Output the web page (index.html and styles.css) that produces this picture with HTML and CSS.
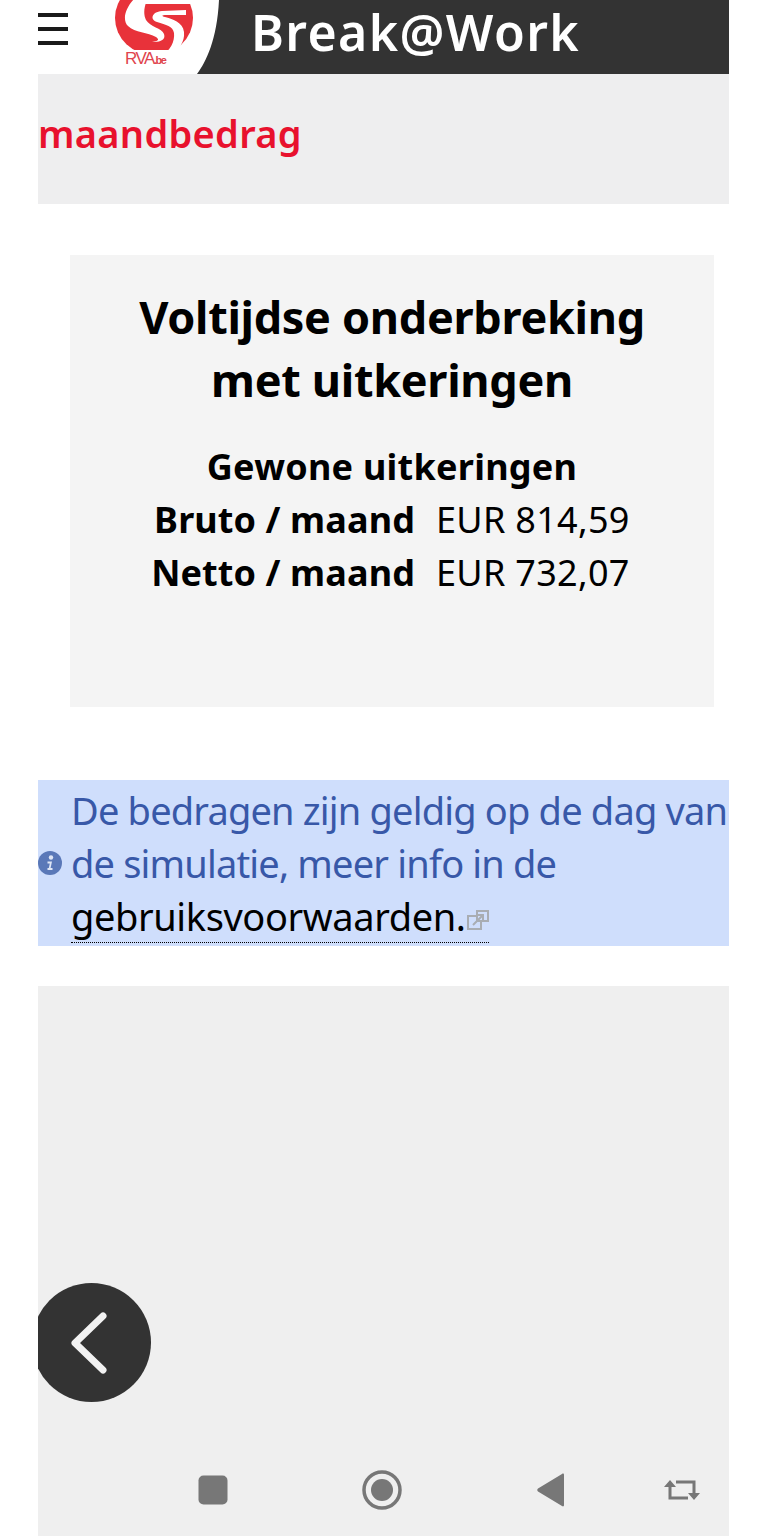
FILE: index.html
```html
<!DOCTYPE html>
<html lang="nl">
<head>
    <meta charset="UTF-8">
    <meta name="viewport" content="width=device-width, initial-scale=1.0">
    <title>Break@Work</title>
    <link rel="stylesheet" href="styles.css">
</head>
<body>
    <div class="page">
        <header class="topbar">
            <button type="button" class="hamburger" aria-label="Menu">
                <span></span>
                <span></span>
                <span></span>
            </button>
            <svg class="logo" width="132" height="74" viewBox="0 0 132 74" aria-label="RVA.be">
                <path d="M132 0V74H97C106 62 117 40 119 0Z" fill="#333333"/>
                <ellipse cx="54" cy="18" rx="39" ry="37" fill="#e8323a"/>
                <path d="M38 -1H100V4H44Z" fill="#ffffff"/>
                <path d="M35 -2C25 8 22 20 28 26C35 33 48 32 56 37C60 40 58 41 52 42C60 42 66 40 64 34C62 28 50 27 46 20C43 14 44 6 48 -2Z" fill="#ffffff"/>
                <path d="M86 10L62 11C51 12 50 20 57 22C66 25 73 26 74 33C75 42 70 50 62 56L70 55C79 50 85 42 84 32C83 22 72 19 65 17C61 16 62 15 66 15L86 15Z" fill="#ffffff"/>
                <rect x="22" y="50" width="48" height="16" fill="#ffffff"/>
                <text x="25" y="64" class="logo-text">RVA<tspan class="logo-tld">.be</tspan></text>
            </svg>
            <div class="brand">Break@Work</div>
        </header>

        <section class="page-title">
            <h2>maandbedrag</h2>
        </section>

        <section class="result-card">
            <h1>Voltijdse onderbreking<br>met uitkeringen</h1>
            <h3>Gewone uitkeringen</h3>
            <div class="amounts">
                <strong>Bruto / maand</strong>
                <span>EUR 814,59</span>
                <strong>Netto / maand</strong>
                <span>EUR 732,07</span>
            </div>
        </section>

        <section class="notice">
            <svg class="notice-icon" width="24" height="24" viewBox="0 0 24 24" aria-hidden="true">
                <circle cx="12" cy="12" r="12" fill="#5a78b8"/>
                <circle cx="13" cy="6.5" r="2.2" fill="#dfe6f5"/>
                <path d="M9.5 10.5H14L12.6 17H14.5V19H9.5V17H10.8L11.8 12.5H9.5Z" fill="#dfe6f5"/>
            </svg>
            <p>De bedragen zijn geldig op de dag van de simulatie, meer info in de <a href="#">gebruiksvoorwaarden.<svg class="external" width="22" height="21" viewBox="0 0 22 21" aria-hidden="true">
                <rect x="1" y="6" width="13" height="13" fill="none" stroke="#a9adb3" stroke-width="2"/>
                <path d="M10 1H21V11H10Z" fill="#cfdefc" stroke="#a9adb3" stroke-width="2"/>
                <path d="M6 15L15 6M11 5H16V10" fill="none" stroke="#a9adb3" stroke-width="2"/>
            </svg></a></p>
        </section>

        <section class="empty-panel">
            <button type="button" class="back-btn" aria-label="Terug">
                <svg width="36" height="62" viewBox="0 0 36 62" aria-hidden="true">
                    <path d="M32 4L4 31L32 58" fill="none" stroke="#f2f2f2" stroke-width="7" stroke-linecap="round" stroke-linejoin="round"/>
                </svg>
            </button>

            <nav class="system-nav">
                <svg width="30" height="30" viewBox="0 0 30 30" aria-hidden="true">
                    <rect x="0.5" y="0.5" width="29" height="29" rx="5" fill="#777777"/>
                </svg>
                <svg width="40" height="40" viewBox="0 0 40 40" aria-hidden="true">
                    <circle cx="20" cy="20" r="18" fill="none" stroke="#777777" stroke-width="3.5"/>
                    <circle cx="20" cy="20" r="11" fill="#777777"/>
                </svg>
                <svg class="back-icon" width="28" height="34" viewBox="0 0 28 34" aria-hidden="true">
                    <path d="M27 2V32C27 33.500 26 33.800 25 33L1 18.500C0 17.800 0 16.200 1 15.500L25 1C26 0.200 27 0.500 27 2Z" fill="#777777"/>
                </svg>
                <svg class="rotate-icon" width="36" height="22" viewBox="0 0 36 22" aria-hidden="true">
                    <path d="M6 7V19H24M12 3H30V15" fill="none" stroke="#777777" stroke-width="3"/>
                    <path d="M0 8L6 1L12 8ZM24 14L30 21L36 14Z" fill="#777777"/>
                </svg>
            </nav>
        </section>
    </div>
</body>
</html>
```

FILE: styles.css
```css
* {
    margin: 0;
    padding: 0;
    box-sizing: border-box;
    font-family: 'Noto Sans', 'Open Sans', sans-serif;
}

html,
body {
    height: 100%;
    overflow: hidden;
    background: #ffffff;
}

.page {
    width: 691px;
    height: 1536px;
    margin-left: 38px;
    display: flex;
    flex-direction: column;
}

.topbar {
    display: flex;
    align-items: stretch;
    height: 74px;
    flex-shrink: 0;
    background: #ffffff;
}

.hamburger {
    width: 62px;
    padding-top: 13px;
    border: none;
    background: none;
    display: flex;
    flex-direction: column;
    gap: 10px;
}

.hamburger span {
    display: block;
    width: 30px;
    height: 4px;
    background: #1a1a1a;
}

.logo {
    flex-shrink: 0;
}

.logo-text {
    font-family: 'Liberation Sans', sans-serif;
    font-size: 17px;
    letter-spacing: -1.5px;
    fill: #e0444e;
}

.logo-tld {
    font-family: 'Liberation Sans', sans-serif;
    font-size: 11px;
    font-weight: bold;
}

.brand {
    flex: 1;
    background: #333333;
    color: #ffffff;
    font-size: 50px;
    font-weight: 600;
    line-height: 64px;
    letter-spacing: 1.4px;
    padding-left: 19px;
}

.page-title {
    height: 130px;
    flex-shrink: 0;
    padding-bottom: 12px;
    background: #eeeeef;
    display: flex;
    align-items: center;
}

.page-title h2 {
    color: #e8112d;
    font-size: 38px;
    font-weight: 600;
    letter-spacing: 0.3px;
}

.result-card {
    width: 644px;
    height: 452px;
    flex-shrink: 0;
    margin: 51px 0 0 32px;
    padding-top: 30px;
    background: #f4f4f4;
    color: #000000;
    text-align: center;
}

.result-card h1 {
    font-size: 45px;
    font-weight: 700;
    line-height: 63px;
    letter-spacing: -0.3px;
}

.result-card h3 {
    margin-top: 29px;
    font-size: 36px;
    font-weight: 700;
    line-height: 53px;
    letter-spacing: 0.25px;
}

.amounts {
    display: grid;
    grid-template-columns: 345px 1fr;
    column-gap: 21px;
    font-size: 36px;
    line-height: 53px;
    text-align: left;
}

.amounts strong {
    text-align: right;
    font-weight: 700;
    letter-spacing: 0.1px;
}

.amounts span {
    letter-spacing: 0.3px;
}

.notice {
    height: 166px;
    flex-shrink: 0;
    margin-top: 73px;
    display: flex;
    align-items: center;
    gap: 9px;
    background: #cfdefc;
    color: #3858a8;
}

.notice-icon {
    flex-shrink: 0;
}

.notice p {
    font-size: 38px;
    line-height: 53px;
    letter-spacing: -0.82px;
}

.notice a {
    color: #000000;
    text-decoration: none;
    letter-spacing: -0.4px;
    border-bottom: 1px dotted #000000;
}

.external {
    margin-left: 1px;
}

.empty-panel {
    flex: 1;
    position: relative;
    overflow: hidden;
    margin-top: 40px;
    background: #efefef;
}

.back-btn {
    position: absolute;
    left: -6px;
    top: 297px;
    width: 119px;
    height: 119px;
    border: none;
    border-radius: 50%;
    background: #333333;
    display: flex;
    align-items: center;
    justify-content: center;
    padding-right: 6px;
}

.system-nav {
    position: absolute;
    left: 160px;
    bottom: 26px;
    display: flex;
    align-items: center;
    gap: 134px;
}

.back-icon {
    margin-left: 1px;
}

.rotate-icon {
    margin-left: -35px;
}
```
